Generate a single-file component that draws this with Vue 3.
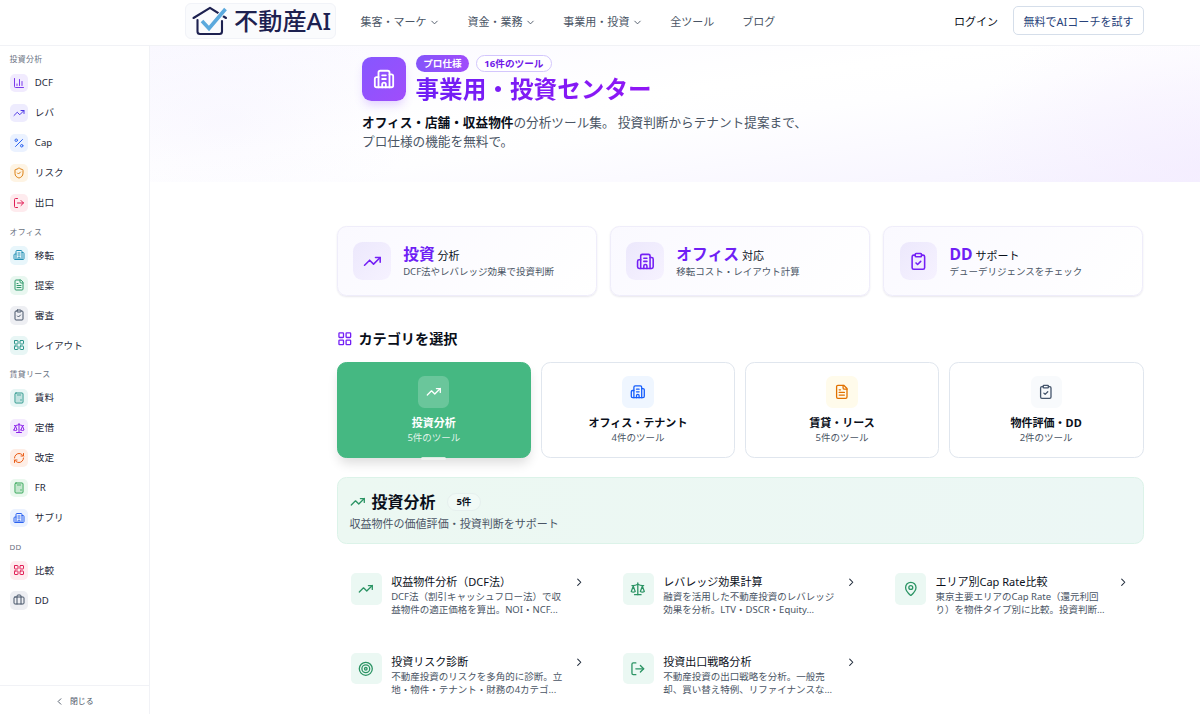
<script setup>
import { ref, h } from 'vue';

const icons = {
  chart: ['M3 3v16a2 2 0 0 0 2 2h16', 'M18 17V9', 'M13 17V5', 'M8 17v-3'],
  trend: ['M16 7h6v6', 'm22 7-8.5 8.5-5-5L2 17'],
  percent: ['M19 5 5 19', 'M9 6.5a2.5 2.5 0 1 1-5 0 2.5 2.5 0 0 1 5 0', 'M20 17.5a2.5 2.5 0 1 1-5 0 2.5 2.5 0 0 1 5 0'],
  shield: [
    'M20 13c0 5-3.5 7.5-7.66 8.95a1 1 0 0 1-.67-.01C7.5 20.5 4 18 4 13V6a1 1 0 0 1 1-1c2 0 4.5-1.2 6.24-2.72a1.17 1.17 0 0 1 1.52 0C14.51 3.81 17 5 19 5a1 1 0 0 1 1 1z',
    'm9 12 2 2 4-4'
  ],
  exit: ['m16 17 5-5-5-5', 'M21 12H9', 'M9 21H5a2 2 0 0 1-2-2V5a2 2 0 0 1 2-2h4'],
  building: [
    'M10 12h4', 'M10 8h4', 'M14 21v-3a2 2 0 0 0-4 0v3',
    'M6 10H4a2 2 0 0 0-2 2v7a2 2 0 0 0 2 2h16a2 2 0 0 0 2-2V9a2 2 0 0 0-2-2h-2',
    'M6 21V5a2 2 0 0 1 2-2h8a2 2 0 0 1 2 2v16'
  ],
  file: [
    'M15 2H6a2 2 0 0 0-2 2v16a2 2 0 0 0 2 2h12a2 2 0 0 0 2-2V7Z',
    'M14 2v4a2 2 0 0 0 2 2h4', 'M10 9H8', 'M16 13H8', 'M16 17H8'
  ],
  clipboard: [
    'M9 2h6a1 1 0 0 1 1 1v2a1 1 0 0 1-1 1H9a1 1 0 0 1-1-1V3a1 1 0 0 1 1-1z',
    'M16 4h2a2 2 0 0 1 2 2v14a2 2 0 0 1-2 2H6a2 2 0 0 1-2-2V6a2 2 0 0 1 2-2h2', 'm9 14 2 2 4-4'
  ],
  grid: [
    'M4 3h5a1 1 0 0 1 1 1v5a1 1 0 0 1-1 1H4a1 1 0 0 1-1-1V4a1 1 0 0 1 1-1z',
    'M15 3h5a1 1 0 0 1 1 1v5a1 1 0 0 1-1 1h-5a1 1 0 0 1-1-1V4a1 1 0 0 1 1-1z',
    'M15 14h5a1 1 0 0 1 1 1v5a1 1 0 0 1-1 1h-5a1 1 0 0 1-1-1v-5a1 1 0 0 1 1-1z',
    'M4 14h5a1 1 0 0 1 1 1v5a1 1 0 0 1-1 1H4a1 1 0 0 1-1-1v-5a1 1 0 0 1 1-1z'
  ],
  calculator: [
    'M6 2h12a2 2 0 0 1 2 2v16a2 2 0 0 1-2 2H6a2 2 0 0 1-2-2V4a2 2 0 0 1 2-2z',
    'M8 6h8', 'M16 14v4', 'M16 10h.01', 'M12 10h.01', 'M8 10h.01', 'M12 14h.01', 'M8 14h.01', 'M12 18h.01', 'M8 18h.01'
  ],
  scale: [
    'm16 16 3-8 3 8c-.87.65-1.92 1-3 1s-2.13-.35-3-1Z',
    'm2 16 3-8 3 8c-.87.65-1.92 1-3 1s-2.13-.35-3-1Z',
    'M7 21h10', 'M12 3v18', 'M3 7h2c2 0 5-1 7-2 2 1 5 2 7 2h2'
  ],
  refresh: [
    'M3 12a9 9 0 0 1 9-9 9.75 9.75 0 0 1 6.74 2.74L21 8', 'M21 3v5h-5',
    'M21 12a9 9 0 0 1-9 9 9.75 9.75 0 0 1-6.74-2.74L3 16', 'M8 16H3v5'
  ],
  briefcase: [
    'M16 20V4a2 2 0 0 0-2-2h-4a2 2 0 0 0-2 2v16',
    'M4 6h16a2 2 0 0 1 2 2v10a2 2 0 0 1-2 2H4a2 2 0 0 1-2-2V8a2 2 0 0 1 2-2z'
  ],
  target: [
    'M22 12a10 10 0 1 1-20 0 10 10 0 0 1 20 0', 'M18 12a6 6 0 1 1-12 0 6 6 0 0 1 12 0',
    'M14 12a2 2 0 1 1-4 0 2 2 0 0 1 4 0'
  ],
  pin: [
    'M20 10c0 4.993-5.539 10.193-7.399 11.799a1 1 0 0 1-1.202 0C9.539 20.193 4 14.993 4 10a8 8 0 0 1 16 0',
    'M15 10a3 3 0 1 1-6 0 3 3 0 0 1 6 0'
  ],
  down: ['m6 9 6 6 6-6'],
  right: ['m9 18 6-6-6-6'],
  left: ['m15 18-6-6 6-6']
};

const Icon = (props) =>
  h('svg', {
    viewBox: '0 0 24 24', fill: 'none', stroke: 'currentColor',
    'stroke-width': 2, 'stroke-linecap': 'round', 'stroke-linejoin': 'round'
  }, icons[props.name].map((d) => h('path', { d })));
Icon.props = ['name'];

const navItems = [
  { label: '集客・マーケ', menu: true },
  { label: '資金・業務', menu: true },
  { label: '事業用・投資', menu: true },
  { label: '全ツール' },
  { label: 'ブログ' }
];

const groups = [
  { label: '投資分析', items: [
    { label: 'DCF', icon: 'chart', tone: 'violet' },
    { label: 'レバ', icon: 'trend', tone: 'indigo' },
    { label: 'Cap', icon: 'percent', tone: 'blue' },
    { label: 'リスク', icon: 'shield', tone: 'amber' },
    { label: '出口', icon: 'exit', tone: 'rose' }
  ] },
  { label: 'オフィス', items: [
    { label: '移転', icon: 'building', tone: 'cyan' },
    { label: '提案', icon: 'file', tone: 'emerald' },
    { label: '審査', icon: 'clipboard', tone: 'slate' },
    { label: 'レイアウト', icon: 'grid', tone: 'teal' }
  ] },
  { label: '賃貸リース', items: [
    { label: '賃料', icon: 'calculator', tone: 'teal' },
    { label: '定借', icon: 'scale', tone: 'purple' },
    { label: '改定', icon: 'refresh', tone: 'orange' },
    { label: 'FR', icon: 'calculator', tone: 'green' },
    { label: 'サブリ', icon: 'building', tone: 'blue' }
  ] },
  { label: 'DD', items: [
    { label: '比較', icon: 'grid', tone: 'rose' },
    { label: 'DD', icon: 'briefcase', tone: 'slate' }
  ] }
];

const stats = [
  { strong: '投資', label: '分析', text: 'DCF法やレバレッジ効果で投資判断', icon: 'trend' },
  { strong: 'オフィス', label: '対応', text: '移転コスト・レイアウト計算', icon: 'building' },
  { strong: 'DD', label: 'サポート', text: 'デューデリジェンスをチェック', icon: 'clipboard' }
];

const activeCategory = ref(0);
const categories = [
  { label: '投資分析', count: 5, icon: 'trend', tone: 'active-tone' },
  { label: 'オフィス・テナント', count: 4, icon: 'building', tone: 'cat-blue' },
  { label: '賃貸・リース', count: 5, icon: 'file', tone: 'cat-amber' },
  { label: '物件評価・DD', count: 2, icon: 'clipboard', tone: 'cat-slate' }
];

const tools = [
  { title: '収益物件分析（DCF法）', icon: 'trend', lines: ['DCF法（割引キャッシュフロー法）で収', '益物件の適正価格を算出。NOI・NCF...'] },
  { title: 'レバレッジ効果計算', icon: 'scale', lines: ['融資を活用した不動産投資のレバレッジ', '効果を分析。LTV・DSCR・Equity...'] },
  { title: 'エリア別Cap Rate比較', icon: 'pin', lines: ['東京主要エリアのCap Rate（還元利回', 'り）を物件タイプ別に比較。投資判断...'] },
  { title: '投資リスク診断', icon: 'target', lines: ['不動産投資のリスクを多角的に診断。立', '地・物件・テナント・財務の4カテゴ...'] },
  { title: '投資出口戦略分析', icon: 'exit', lines: ['不動産投資の出口戦略を分析。一般売', '却、買い替え特例、リファイナンスな...'] }
];
</script>

<template>
  <div class="page">
    <header class="header">
      <a class="logo">
        <svg class="logo-mark" viewBox="0 0 36 30" fill="none">
          <path d="M1.5 12 L18 1.8 L34 12" stroke="#1d2150" stroke-width="2.1" stroke-linecap="round" stroke-linejoin="round" />
          <path d="M5.5 14 V25.5 Q5.5 28 8 28 H27.5 Q30 28 30 25.5 V15" stroke="#1d2150" stroke-width="2.1" stroke-linecap="round" />
          <path d="M10 15 L17 22.5 L33.5 3" stroke="#fafbfd" stroke-width="5.5" />
          <path d="M10 15 L17 22.5 L33.5 3" stroke="#5ba9dd" stroke-width="3.6" />
        </svg>
        <span>不動産AI</span>
      </a>
      <nav class="nav">
        <a v-for="item in navItems" :key="item.label">
          {{ item.label }}<Icon v-if="item.menu" name="down" />
        </a>
      </nav>
      <a class="login">ログイン</a>
      <button class="trial">無料でAIコーチを試す</button>
    </header>

    <div class="body">
      <aside class="sidebar">
        <div class="groups">
          <section v-for="group in groups" :key="group.label">
            <h4>{{ group.label }}</h4>
            <a v-for="item in group.items" :key="item.label" class="side-item">
              <span class="side-icon" :class="item.tone"><Icon :name="item.icon" /></span>
              <span class="side-label">{{ item.label }}</span>
            </a>
          </section>
        </div>
        <div class="collapse"><Icon name="left" />閉じる</div>
      </aside>

      <main class="main">
        <section class="hero">
          <div class="hero-head">
            <div class="hero-icon"><Icon name="building" /></div>
            <div>
              <div class="badges">
                <span class="badge solid">プロ仕様</span>
                <span class="badge outline">16件のツール</span>
              </div>
              <h1>事業用・投資センター</h1>
            </div>
          </div>
          <p><b>オフィス・店舗・収益物件</b>の分析ツール集。 投資判断からテナント提案まで、<br>プロ仕様の機能を無料で。</p>
        </section>

        <div class="content">
          <div class="stats">
            <div v-for="stat in stats" :key="stat.strong" class="stat">
              <div class="stat-icon"><Icon :name="stat.icon" /></div>
              <div>
                <div class="stat-title"><strong>{{ stat.strong }}</strong> {{ stat.label }}</div>
                <div class="stat-text">{{ stat.text }}</div>
              </div>
            </div>
          </div>

          <h2 class="section-title"><Icon name="grid" />カテゴリを選択</h2>

          <div class="categories">
            <button
              v-for="(cat, i) in categories"
              :key="cat.label"
              class="category"
              :class="{ active: i === activeCategory }"
              @click="activeCategory = i"
            >
              <span class="cat-icon" :class="cat.tone"><Icon :name="cat.icon" /></span>
              <span class="cat-label">{{ cat.label }}</span>
              <span class="cat-count">{{ cat.count }}件のツール</span>
            </button>
          </div>

          <div class="banner">
            <div class="banner-head">
              <Icon name="trend" />
              <h3>投資分析</h3>
              <span class="count">5件</span>
            </div>
            <p>収益物件の価値評価・投資判断をサポート</p>
          </div>

          <div class="tools">
            <a v-for="tool in tools" :key="tool.title" class="tool">
              <span class="tool-icon"><Icon :name="tool.icon" /></span>
              <div class="tool-body">
                <div class="tool-title">{{ tool.title }}</div>
                <div v-for="line in tool.lines" :key="line" class="tool-line">{{ line }}</div>
              </div>
              <Icon name="right" class="tool-arrow" />
            </a>
          </div>
        </div>
      </main>
    </div>
  </div>
</template>

<style>
html {
  font-size: 12.6px;
}
body {
  overflow: hidden;
}
</style>

<style scoped>
* {
  box-sizing: border-box;
  margin: 0;
}
svg {
  flex-shrink: 0;
}
.page {
  display: flex;
  flex-direction: column;
  height: 714px;
  overflow: hidden;
  background: #fff;
  color: #0a0f1a;
  font-family: "Noto Sans", "Noto Sans CJK JP", sans-serif;
  font-size: 0.875rem;
  line-height: 1.5;
}

/* header */
.header {
  display: flex;
  align-items: center;
  flex-shrink: 0;
  height: 46px;
  padding: 0 56px 4px 185px;
  border-bottom: 1px solid #f1f2f6;
  white-space: nowrap;
}
.logo {
  display: flex;
  align-items: center;
  width: 151px;
  height: 36px;
  padding: 1px 0 0 6px;
  border: 1px solid #f1f3f8;
  border-radius: 6px;
  background: #fafbfd;
  color: #1d2150;
  font-size: 24.2px;
  font-weight: 500;
  line-height: 1;
}
.logo-mark {
  width: 36px;
  height: 30px;
  margin-right: 6px;
}
.nav {
  display: flex;
  gap: 27px;
  margin-left: 24.5px;
  padding-top: 3.5px;
  color: #4a5565;
}
.nav a {
  display: flex;
  align-items: center;
  gap: 2.8px;
}
.nav svg {
  width: 11px;
  height: 11px;
}
.nav a:last-child {
  margin-left: 1px;
}
.login {
  margin-left: auto;
  margin-right: 15px;
  padding-top: 3.5px;
}
.trial {
  width: 131px;
  height: 29px;
  padding: 3px 0 0;
  border: 1px solid #d5deea;
  border-radius: 5px;
  background: #fff;
  color: #28427a;
  font: inherit;
}

.body {
  display: flex;
  flex: 1;
  min-height: 0;
}

/* sidebar */
.sidebar {
  display: flex;
  flex-direction: column;
  width: 150px;
  flex-shrink: 0;
  border-right: 1px solid #f1f2f6;
}
.groups {
  flex: 1;
}
.groups h4 {
  height: 22.5px;
  padding: 8px 0 0 9.4px;
  color: #6a7282;
  font-size: 7.9px;
  font-weight: 400;
  line-height: 12px;
  letter-spacing: 0.05em;
}
.groups section:first-child h4 {
  height: 21.9px;
  padding-top: 7px;
}
.side-item {
  display: flex;
  align-items: center;
  gap: 6.5px;
  height: 30px;
  padding-left: 9.6px;
  color: #1e2939;
  font-size: 9.6px;
}
.side-label {
  padding-top: 1.4px;
}
.side-icon {
  display: flex;
  align-items: center;
  justify-content: center;
  width: 18.75px;
  height: 18.75px;
  border-radius: 5px;
}
.side-icon svg {
  width: 12px;
  height: 12px;
}
.violet { background: #f1ebfe; color: #7c3aed; }
.indigo { background: #eeecfe; color: #4f39e6; }
.blue { background: #ebf2ff; color: #2b62f0; }
.amber { background: #fef4e4; color: #dc7f10; }
.rose { background: #feebee; color: #e11d55; }
.cyan { background: #e8f6fb; color: #2691b5; }
.emerald { background: #e9f7f0; color: #2f9a6b; }
.slate { background: #eeeff3; color: #475569; }
.teal { background: #e8f6f5; color: #2b968b; }
.purple { background: #f4eafe; color: #8a20ea; }
.orange { background: #feeee6; color: #ea5d16; }
.green { background: #eaf8ee; color: #2fa352; }
.collapse {
  display: flex;
  align-items: center;
  justify-content: center;
  gap: 4.5px;
  height: 29px;
  padding: 3px 1px 0 0;
  border-top: 1px solid #f1f2f6;
  color: #4a5565;
  font-size: 7.9px;
}
.collapse svg {
  width: 11px;
  height: 11px;
}

/* hero */
.main {
  flex: 1;
  min-width: 0;
}
.hero {
  height: 136px;
  padding: 9px 0 0 212px;
  background:
    radial-gradient(ellipse 190px 110px at 75px 75px, rgba(240, 236, 254, 0.3), transparent),
    radial-gradient(ellipse 240px 170px at 1050px 120px, rgba(243, 233, 255, 0.5), transparent),
    linear-gradient(172deg, #faf9ff 0%, #fff 42%, #fefeff 55%, #f5f2ff 100%);
}
.hero-head {
  display: flex;
  gap: 9.5px;
}
.hero-icon {
  display: flex;
  align-items: center;
  justify-content: center;
  width: 44px;
  height: 44px;
  margin-top: 2px;
  border-radius: 9.4px;
  background: linear-gradient(135deg, #8657ff, #a04dfb);
  box-shadow: 0 6px 10px -2px rgba(142, 81, 255, 0.25);
  color: #fff;
}
.hero-icon svg {
  width: 22px;
  height: 22px;
}
.badges {
  display: flex;
  gap: 6.3px;
}
.badge {
  display: flex;
  align-items: center;
  height: 17px;
  padding: 1px 7.7px 0;
  border-radius: 9px;
  font-size: 0.765rem;
  font-weight: 700;
}
.solid {
  background: linear-gradient(90deg, #8455fa, #a04dfb);
  color: #fff;
}
.outline {
  border: 1px solid #d3c6fd;
  background: #fff;
  color: #7018e8;
}
h1 {
  padding-top: 1px;
  background: linear-gradient(90deg, #6f1ff5, #9016f5);
  background-clip: text;
  color: transparent;
  font-size: 1.875rem;
  font-weight: 700;
  line-height: 33px;
}
.hero p {
  margin-top: 7px;
  color: #4a5565;
  font-size: 1.004rem;
  line-height: 19px;
}
.hero b {
  color: #0a0f1a;
}

/* stat cards */
.content {
  width: 807px;
  margin-left: 186.5px;
  padding-top: 44px;
}
.stats {
  display: grid;
  grid-template-columns: repeat(3, 1fr);
  gap: 12.5px;
}
.stat {
  display: flex;
  align-items: center;
  gap: 12.5px;
  height: 70.4px;
  padding: 0 15.7px;
  border: 1px solid #efedfa;
  border-radius: 9.4px;
  background: linear-gradient(135deg, #faf9ff, #fff);
  box-shadow: 0 1px 2px rgba(30, 20, 80, 0.1);
}
.stat-icon {
  display: flex;
  align-items: center;
  justify-content: center;
  width: 37.5px;
  height: 37.5px;
  border-radius: 9.4px;
  background: linear-gradient(135deg, #ece8fc, #f6f2ff);
  color: #7420f5;
}
.stat-icon svg {
  width: 18.75px;
  height: 18.75px;
}
.stat-title {
  padding-top: 1px;
  line-height: 20px;
}
.stat-title strong {
  color: #6f1ff5;
  font-size: 1.25rem;
}
.stat-text {
  color: #4a5565;
  font-size: 0.755rem;
  line-height: 12.5px;
}

/* categories */
.section-title {
  display: flex;
  align-items: center;
  gap: 6.3px;
  height: 21px;
  margin: 31.5px 0 13.4px;
  font-size: 1.125rem;
  font-weight: 700;
}
.section-title svg {
  width: 15.6px;
  height: 15.6px;
  color: #7420f5;
}
.categories {
  display: grid;
  grid-template-columns: repeat(4, 1fr);
  gap: 9.4px;
}
.category {
  position: relative;
  display: flex;
  flex-direction: column;
  align-items: center;
  height: 96px;
  padding: 13px 0 0;
  border: 1px solid #e0e6ee;
  border-radius: 9.4px;
  background: #fff;
  color: #0a0f1a;
  font: inherit;
}
.category.active {
  border-color: #45b882;
  background: #45b882;
  box-shadow: 0 7px 12px -2px rgba(0, 0, 0, 0.14);
  color: #fff;
}
.category.active::after {
  content: '';
  position: absolute;
  bottom: -3px;
  width: 25px;
  height: 3px;
  border-radius: 2px;
  background: rgba(240, 243, 241, 0.85);
}
.cat-icon {
  display: flex;
  align-items: center;
  justify-content: center;
  width: 31.25px;
  height: 31.25px;
  border-radius: 6.5px;
}
.cat-icon svg {
  width: 15.6px;
  height: 15.6px;
}
.active-tone { background: rgba(255, 255, 255, 0.2); color: #fff; }
.cat-blue { background: #eff6ff; color: #155dfc; }
.cat-amber { background: #fffbeb; color: #e17100; }
.cat-slate { background: #f8fafc; color: #45556c; }
.cat-label {
  margin-top: 6px;
  font-weight: 700;
  line-height: 17px;
}
.cat-count {
  color: #4a5565;
  font-size: 0.755rem;
  line-height: 14px;
}
.active .cat-count {
  color: rgba(255, 255, 255, 0.85);
}

/* selected category */
.banner {
  height: 67px;
  margin-top: 18.3px;
  padding: 13px 12px;
  border: 1px solid #dcf3e9;
  border-radius: 9.4px;
  background: linear-gradient(90deg, #ecf8f2, #ecf7f5);
}
.banner-head {
  display: flex;
  align-items: center;
  height: 22px;
}
.banner-head svg {
  width: 15.6px;
  height: 15.6px;
  color: #2b9464;
}
.banner h3 {
  margin-left: 6.3px;
  font-size: 1.27rem;
  font-weight: 700;
}
.count {
  margin-left: 11.5px;
  padding: 0 8.5px;
  border: 1px solid #e6f0ee;
  border-radius: 9px;
  background: #f1faf6;
  font-size: 0.755rem;
  font-weight: 700;
  line-height: 16px;
}
.banner p {
  color: #4a5565;
  line-height: 21px;
}

/* tools */
.tools {
  display: grid;
  grid-template-columns: repeat(3, 1fr);
  gap: 9.4px;
  margin-top: 15.8px;
}
.tool {
  display: flex;
  gap: 9.4px;
  height: 70.3px;
  padding: 14px;
}
.tool-icon {
  display: flex;
  align-items: center;
  justify-content: center;
  flex-shrink: 0;
  width: 31.25px;
  height: 31.25px;
  border-radius: 5px;
  background: #ebf8f3;
  color: #2b9464;
}
.tool-icon svg {
  width: 15.6px;
  height: 15.6px;
}
.tool-body {
  flex: 1;
  min-width: 0;
  padding-top: 0.6px;
  white-space: nowrap;
}
.tool-title {
  margin-bottom: 1px;
  line-height: 16px;
}
.tool-line {
  color: #4a5565;
  font-size: 0.755rem;
  line-height: 12.9px;
}
.tool-arrow {
  width: 12.5px;
  height: 12.5px;
  margin-top: 3px;
  color: #1e2939;
}
</style>
